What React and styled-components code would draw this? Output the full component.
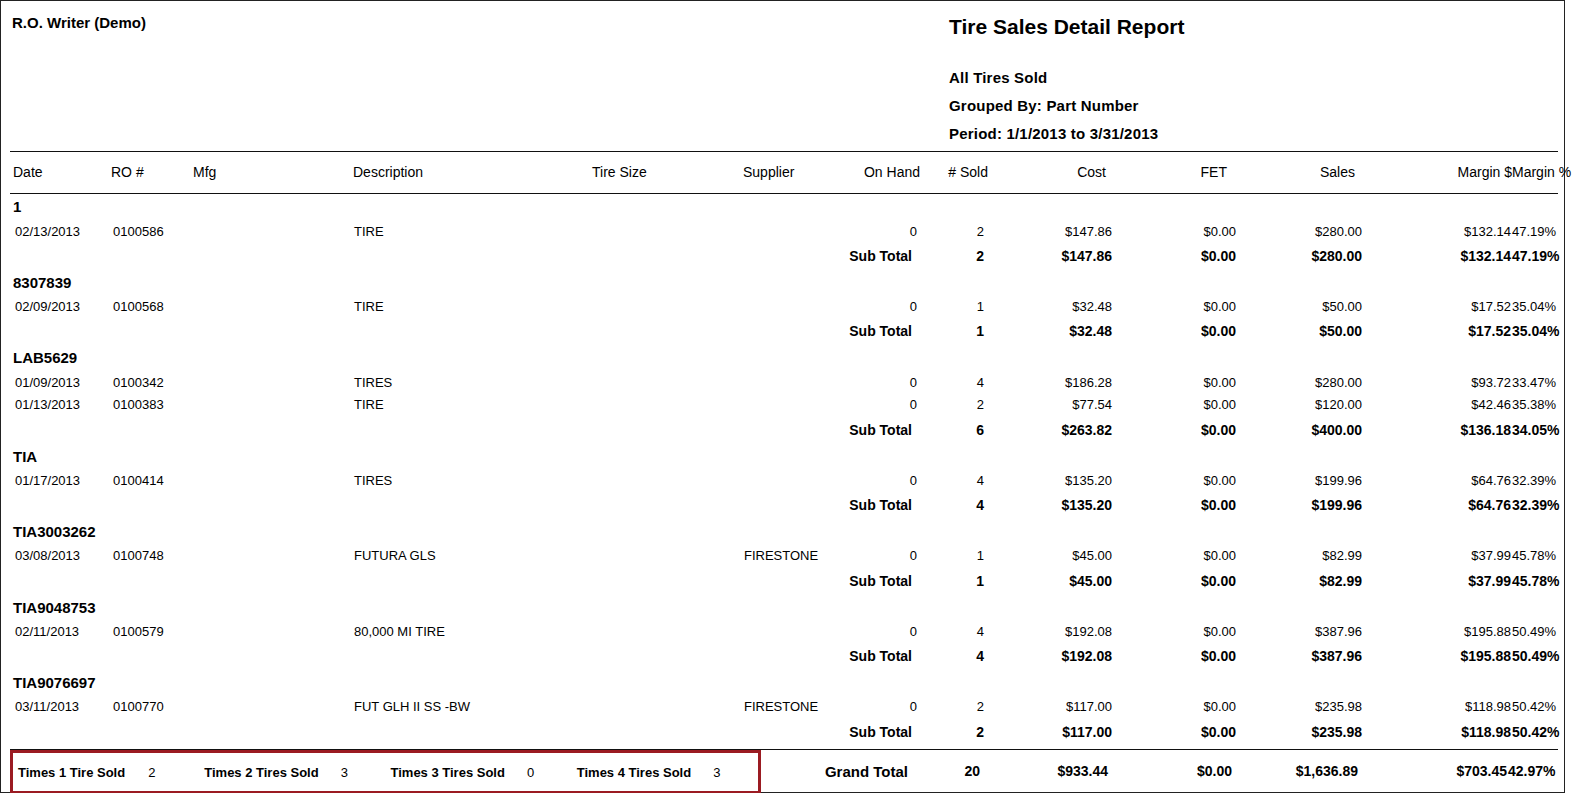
import React from "react";
import styled, { createGlobalStyle } from "styled-components";

const G = createGlobalStyle`
  body { margin: 0; background: #fff; font-family: "Liberation Sans", Arial, sans-serif; color: #000; }
`;
const COLS = "100px 81px 160px 239px 151px 84px 95px 70px 123px 124px 126px 149px 48px";

const Page = styled.div`
  width: 1565px; height: 793px; border: 1px solid #222; position: relative; box-sizing: border-box;
  padding: 0 6px 0 9px; display: flex; flex-direction: column;
`;
const Top = styled.div`display: flex; justify-content: space-between; height: 151px;`;
const Company = styled.div`font-weight: bold; font-size: 15px; padding: 13px 0 0 2px;`;
const TitleBlock = styled.div`width: 609px; padding-top: 14px;`;
const Title = styled.div`font-size: 21px; font-weight: bold; margin-bottom: 25px;`;
const Sub = styled.div`font-size: 15px; font-weight: bold; line-height: 28px; letter-spacing: 0.2px;`;
const Row = styled.div`
  display: grid; grid-template-columns: ${COLS}; align-items: center; height: ${p => p.h}px;
  font-size: ${p => p.fs || 13}px; font-weight: ${p => p.b ? "bold" : "normal"};
  ${p => p.top ? `border-top: 1.5px solid #111;` : ""}
  ${p => p.bottom ? `border-bottom: 1.5px solid #111;` : ""}
`;
const C = styled.div`
  text-align: ${p => p.r ? "right" : "left"}; padding-left: ${p => p.pl || 0}px; padding-right: ${p => p.pr || 0}px;
  white-space: nowrap; grid-column: ${p => p.span || "auto"};
`;
const GroupName = styled.div`font-size: 15px; font-weight: bold; height: 26px; display: flex; align-items: center; padding-left: 3px;`;
const Footer = styled.div`display: flex; align-items: center; height: 42px; border-top: 1.5px solid #111; margin-top: 4px;`;
const Box = styled.div`
  position: absolute; left: 9px; top: 749px; width: 745px; height: 38px; border: 3px solid #9b1b22;
  display: flex; align-items: center; font-size: 13px; font-weight: bold; background: #fff;
`;
const Stat = styled.div`display: flex; width: 196px; padding-left: 5px; box-sizing: border-box;`;
const StatVal = styled.span`font-weight: normal; margin-left: ${p => p.m}px;`;
const GT = styled.div`
  display: grid; grid-template-columns: 906px 70px 123px 124px 126px 149px 48px; width: 100%; font-weight: bold; font-size: 14px;
`;

const groups = [
  ["1", [["02/13/2013","0100586","TIRE","","0","2","$147.86","$0.00","$280.00","$132.14","47.19%"]], ["2","$147.86","$0.00","$280.00","$132.14","47.19%"]],
  ["8307839", [["02/09/2013","0100568","TIRE","","0","1","$32.48","$0.00","$50.00","$17.52","35.04%"]], ["1","$32.48","$0.00","$50.00","$17.52","35.04%"]],
  ["LAB5629", [["01/09/2013","0100342","TIRES","","0","4","$186.28","$0.00","$280.00","$93.72","33.47%"],["01/13/2013","0100383","TIRE","","0","2","$77.54","$0.00","$120.00","$42.46","35.38%"]], ["6","$263.82","$0.00","$400.00","$136.18","34.05%"]],
  ["TIA", [["01/17/2013","0100414","TIRES","","0","4","$135.20","$0.00","$199.96","$64.76","32.39%"]], ["4","$135.20","$0.00","$199.96","$64.76","32.39%"]],
  ["TIA3003262", [["03/08/2013","0100748","FUTURA GLS","FIRESTONE","0","1","$45.00","$0.00","$82.99","$37.99","45.78%"]], ["1","$45.00","$0.00","$82.99","$37.99","45.78%"]],
  ["TIA9048753", [["02/11/2013","0100579","80,000 MI TIRE","","0","4","$192.08","$0.00","$387.96","$195.88","50.49%"]], ["4","$192.08","$0.00","$387.96","$195.88","50.49%"]],
  ["TIA9076697", [["03/11/2013","0100770","FUT GLH II SS -BW","FIRESTONE","0","2","$117.00","$0.00","$235.98","$118.98","50.42%"]], ["2","$117.00","$0.00","$235.98","$118.98","50.42%"]],
];

const Nums = ({ v, sub }) => (
  <>
    <C r pr={6}>{v[0]}</C>
    <C r pr={1}>{v[1]}</C>
    <C r pr={1}>{v[2]}</C>
    <C r pr={1}>{v[3]}</C>
    <C r pr={1}>{v[4]}</C>
    <C r pr={sub ? 4 : 10}>{v[5]}</C>
  </>
);

export default function App() {
  return (
    <Page>
      <G />
      <Top>
        <Company>R.O. Writer (Demo)</Company>
        <TitleBlock>
          <Title>Tire Sales Detail Report</Title>
          <Sub>All Tires Sold</Sub>
          <Sub>Grouped By: Part Number</Sub>
          <Sub>Period: 1/1/2013 to 3/31/2013</Sub>
        </TitleBlock>
      </Top>
      <Row h={41} fs={14} top bottom>
        <C pl={3}>Date</C><C pl={1}>RO #</C><C pl={2}>Mfg</C><C pl={2}>Description</C><C pl={2}>Tire Size</C><C pl={2}>Supplier</C>
        <C r>On Hand</C><C r pr={2}>#&nbsp;Sold</C><C r pr={7}>Cost</C><C r pr={10}>FET</C><C r pr={8}>Sales</C><C r>Margin $</C><C r>Margin %</C>
      </Row>
      {groups.map(([name, rows, st]) => (
        <React.Fragment key={name}>
          <GroupName>{name}</GroupName>
          {rows.map((r, i) => (
            <Row h={23} key={i}>
              <C pl={5}>{r[0]}</C><C pl={3}>{r[1]}</C><C /><C pl={3}>{r[2]}</C><C /><C pl={3}>{r[3]}</C>
              <C r pr={3}>{r[4]}</C>
              <Nums v={r.slice(5)} />
            </Row>
          ))}
          <Row h={27} b fs={14}>
            <C span="1 / 8" r pr={8}>Sub Total</C>
            <Nums v={st} sub />
          </Row>
        </React.Fragment>
      ))}
      <Footer>
        <GT>
          <C r pr={8} style={{ fontSize: 15 }}>Grand Total</C>
          <C r pr={6}>20</C><C r pr={1}>$933.44</C><C r pr={1}>$0.00</C><C r pr={1}>$1,636.89</C><C r pr={1}>$703.45</C><C r pr={4}>42.97%</C>
        </GT>
      </Footer>
      <Box>
        <Stat>Times 1 Tire Sold<StatVal m={23}>2</StatVal></Stat>
        <Stat>Times 2 Tires Sold<StatVal m={22}>3</StatVal></Stat>
        <Stat>Times 3 Tires Sold<StatVal m={22}>0</StatVal></Stat>
        <Stat>Times 4 Tires Sold<StatVal m={22}>3</StatVal></Stat>
      </Box>
    </Page>
  );
}
